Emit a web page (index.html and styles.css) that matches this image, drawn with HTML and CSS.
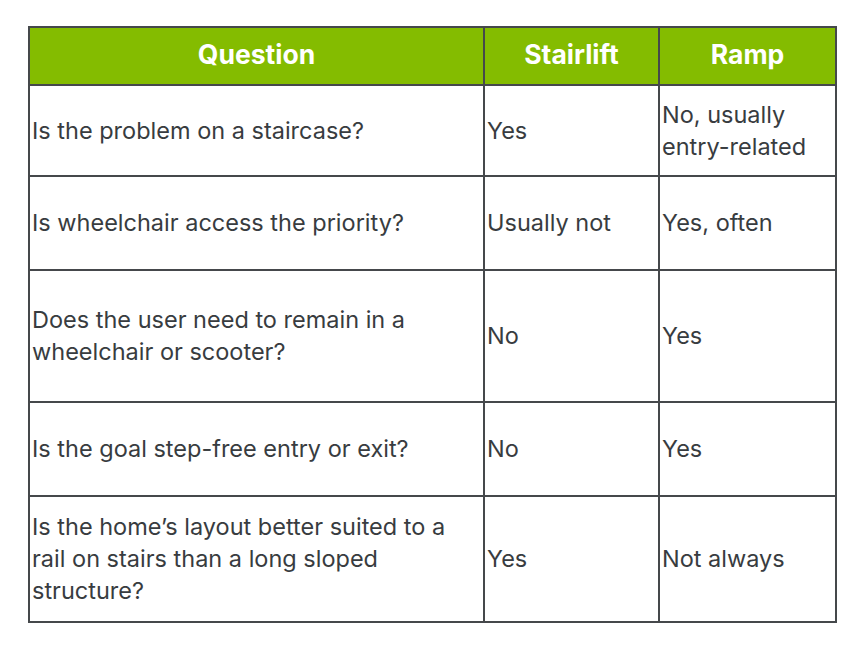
FILE: index.html
```html
<!DOCTYPE html>
<html>
<head>
<meta charset="utf-8">
<link rel="stylesheet" href="styles.css">
</head>
<body>
<table class="cmp">
  <colgroup>
    <col class="c-q">
    <col class="c-s">
    <col class="c-r">
  </colgroup>
  <thead>
    <tr class="r-head"><th>Question</th><th>Stairlift</th><th>Ramp</th></tr>
  </thead>
  <tbody>
    <tr class="r1"><td>Is the problem on a staircase?</td><td>Yes</td><td>No, usually entry-related</td></tr>
    <tr class="r2"><td>Is wheelchair access the priority?</td><td>Usually not</td><td>Yes, often</td></tr>
    <tr class="r3"><td>Does the user need to remain in a wheelchair or scooter?</td><td>No</td><td>Yes</td></tr>
    <tr class="r4"><td>Is the goal step-free entry or exit?</td><td>No</td><td>Yes</td></tr>
    <tr class="r5"><td>Is the home’s layout better suited to a rail on stairs than a long sloped structure?</td><td>Yes</td><td>Not always</td></tr>
  </tbody>
</table>
</body>
</html>
```
FILE: styles.css
```css
html, body {
  margin: 0;
  background: #ffffff;
}
body {
  padding: 26px 0 0 28px;
  font-family: Inter, "Noto Sans", sans-serif;
}
.cmp {
  border-collapse: collapse;
  table-layout: fixed;
  width: 807px;
  color: #383c40;
  font-size: 23.5px;
  line-height: 32px;
}
.c-q { width: 455px; }
.c-s { width: 175px; }
.c-r { width: 177px; }
.cmp th, .cmp td {
  border: 2px solid #45484b;
  padding: 0 2px;
  vertical-align: middle;
}
.cmp th {
  background: #84bc00;
  color: #ffffff;
  font-weight: 700;
  font-size: 26.5px;
  text-align: center;
  padding-bottom: 4px;
}
.cmp td { text-align: left; }
.r-head { height: 58px; }
.r1 { height: 91px; }
.r2 { height: 94px; }
.r3 { height: 132px; }
.r4 { height: 94px; }
.r5 { height: 126px; }
```
